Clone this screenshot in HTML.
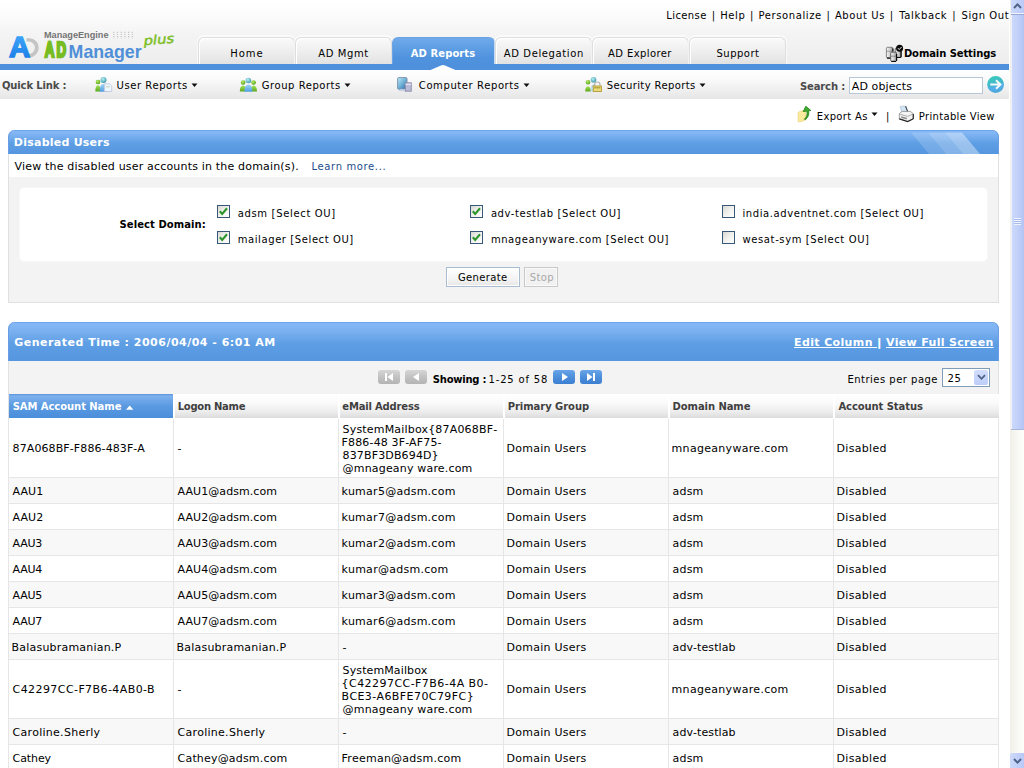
<!DOCTYPE html>
<html>
<head>
<meta charset="utf-8">
<title>ADManager Plus - Disabled Users</title>
<style>
html,body{margin:0;padding:0;}
body{width:1024px;height:768px;overflow:hidden;background:#fff;position:relative;
 font-family:"DejaVu Sans","Liberation Sans",sans-serif;font-size:11px;color:#000;}
.a{position:absolute;}
.t{position:absolute;white-space:nowrap;line-height:14px;}
svg{position:absolute;overflow:visible;}
/* header */
#hdr{left:0;top:0;width:1009px;height:64px;background:linear-gradient(#ffffff 0,#fcfcfc 14px,#f4f4f4 34px,#ededed 64px);}
#bar{left:0;top:64px;width:1009px;height:6px;background:#4e90dc;}
#ql{left:0;top:70px;width:1009px;height:29px;background:linear-gradient(#ffffff 0,#fbfbfb 8px,#f1f1f1 18px,#e6e6e6 29px);}
.tab{position:absolute;top:37px;height:27px;width:97px;border:1px solid #dedede;border-bottom:none;border-radius:6px 6px 0 0;
 background:linear-gradient(#fafafa 0,#f2f2f2 9px,#e9e9e9 19px,#e1e1e1 27px);box-sizing:border-box;box-shadow:inset 1px 1px 0 #fff,0 -1px 0 1px rgba(255,255,255,.6);}
.tab.on{background:linear-gradient(#70aaea 0,#5e9ee4 10px,#4f92dd 20px,#4e90dc 27px);border-color:#6aa4e6;width:103px;box-shadow:none;}
/* panels */
.ph{background:linear-gradient(#6299e2 0,#84b7f5 1.5px,#7db2f1 20%,#5e9ee4 55%,#5596e0 100%);border-radius:7px 7px 0 0;box-shadow:inset 1px 0 0 #6a9de6,inset -1px 0 0 #6a9de6;}
.cb{position:absolute;width:13px;height:13px;box-sizing:border-box;border:1px solid #38587a;background:linear-gradient(135deg,#d8d8d3 0,#f1f1ed 50%,#ffffff 100%);}
.pg{position:absolute;top:370px;width:22px;height:14px;border-radius:3px;}
.pg.g{background:linear-gradient(#d6d6d6,#c2c2c2 50%,#b4b4b4);}
.pg.bl{background:linear-gradient(#6aa6e8,#4d8fdb 50%,#3c7fd0);}
/* table */
#grid{position:absolute;left:8px;top:394px;width:991px;border-collapse:separate;border-spacing:0;table-layout:fixed;}
#grid th{height:25px;padding:0 0 1px 4px;text-align:left;font-weight:bold;font-size:10px;color:#3f3f3f;border-left:2px solid #fff;white-space:nowrap;line-height:14px;
 background:linear-gradient(#ffffff 0,#fbfbfb 8px,#ececec 18px,#dcdcdc 24px,#fff 24px);box-sizing:border-box;vertical-align:top;padding-top:6px;}
#grid th.s{background:linear-gradient(#5d92dc 0,#7db1ee 2px,#5a9ae1 12px,#4a8dda 24px,#fff 24px);color:#fff;border-left:1px solid #e0e0e0;}
#grid th i.up{display:inline-block;width:0;height:0;border-left:3.7px solid transparent;border-right:3.7px solid transparent;border-bottom:4px solid #fff;margin-left:4px;vertical-align:1px;}
#grid td{height:26px;padding:4px 0 2px 3.6px;border-left:1px solid #e6e6e6;border-bottom:1px solid #e6e6e6;line-height:13px;box-sizing:border-box;vertical-align:middle;white-space:nowrap;}
#grid tr td:last-child{border-right:1px solid #e6e6e6;}
#grid tr.e td{background:#f8f8f8;}
#grid span{display:inline-block;}
</style>
</head>
<body>
<!-- header backgrounds -->
<div class="a" id="hdr"></div>
<div class="a" id="bar"></div>
<div class="a" id="ql"></div>

<!-- logo -->
<svg style="left:0;top:26px" width="180" height="40" viewBox="0 26 180 40">
 <defs>
  <linearGradient id="lgA" x1="0" y1="0" x2="0" y2="1"><stop offset="0" stop-color="#45adfb"/><stop offset="1" stop-color="#1878e6"/></linearGradient>
 </defs>
 <path d="M26.5 38.3 h3 a9.2 9.45 0 0 1 0 18.9 h-3 v-3.2 h2.2 a6.2 6.2 0 0 0 0-12.4 h-2.2z" fill="#c4c4c4"/>
 <text x="8.9" y="56.9" font-family="Liberation Sans,sans-serif" font-weight="bold" font-size="29.5" fill="url(#lgA)" stroke="url(#lgA)" stroke-width="1.5" stroke-linejoin="miter" textLength="21.2" lengthAdjust="spacingAndGlyphs">A</text>
 <text x="44" y="38" font-family="Liberation Sans,sans-serif" font-weight="bold" font-size="9" fill="#747474" textLength="64.5" lengthAdjust="spacingAndGlyphs">ManageEngine</text>
 <g stroke="#c4c4c4" stroke-width="1.2" stroke-dasharray="1.2 0.9"><path d="M113.8 31.8v6.400M117.5 31.800v6.400M121.200 31.800v6.400M124.900 31.800v6.400M128.600 31.800v6.400M132.300 31.800v6.400"/></g>
 <text transform="translate(44.7 57.2) scale(0.625 1)" x="0" y="0" font-family="Liberation Sans,sans-serif" font-weight="bold" font-size="21.4" fill="#77bc22" stroke="#77bc22" stroke-width="2.6" letter-spacing="3.6">AD</text>
 <text x="68.6" y="57.6" font-family="Liberation Sans,sans-serif" font-weight="bold" font-size="17.8" fill="#4f8fd8" textLength="73" lengthAdjust="spacingAndGlyphs">Manager</text>
 <text x="144" y="45.3" font-family="DejaVu Sans,sans-serif" font-style="oblique" font-size="12.5" fill="#7cbf27" stroke="#7cbf27" stroke-width="0.45" transform="rotate(-5 144 45.3)" textLength="30.5" lengthAdjust="spacingAndGlyphs">plus</text>
</svg>

<!-- tabs -->
<div class="tab" style="left:198px;"></div>
<div class="tab" style="left:295px;"></div>
<div class="tab on" style="left:392px;"></div>
<div class="tab" style="left:495px;"></div>
<div class="tab" style="left:592px;"></div>
<div class="tab" style="left:689px;"></div>
<svg style="left:428px;top:64px" width="30" height="6" viewBox="0 0 30 6"><path d="M2.500 6 L13 1.400 Q15 0.500 17 1.400 L27.500 6z" fill="#fff"/></svg>

<!-- domain settings icon -->
<svg style="left:884px;top:43px" width="22" height="20" viewBox="884 43 22 20">
 <defs><linearGradient id="cy" x1="0" y1="0" x2="1" y2="0"><stop offset="0" stop-color="#f6f6f6"/><stop offset="0.55" stop-color="#cfcfcf"/><stop offset="1" stop-color="#8a8a8a"/></linearGradient></defs>
 <rect x="895.200" y="48" width="5.800" height="9.300" rx="1" fill="url(#cy)" stroke="#4a4a4a" stroke-width="0.800"/>
 <path d="M901.100 50v7.200M895.800 57.500h5" stroke="#0c0c0c" stroke-width="1.200"/>
 <rect x="886.400" y="47.300" width="6.400" height="10.600" rx="1" fill="url(#cy)" stroke="#6a6a6a" stroke-width="0.800"/>
 <path d="M886.600 51.300h6.200" stroke="#8a8a8a" stroke-width="0.800"/>
 <path d="M887 58.200h3.600M892.900 48.500v3" stroke="#111" stroke-width="1.200"/>
 <rect x="890.700" y="52.200" width="5.800" height="9" rx="1" fill="url(#cy)" stroke="#4a4a4a" stroke-width="0.800"/>
 <path d="M890.900 56.200h5.400" stroke="#777" stroke-width="0.800"/>
 <path d="M891.300 61.500h4.800M896.600 54v7" stroke="#0c0c0c" stroke-width="1.200"/>
 <circle cx="899.600" cy="48.300" r="3.500" fill="#0a0a0a"/>
 <path d="M897.900 48.100l1.300 1.500 2.400-2.600" stroke="#fff" stroke-width="0.900" fill="none"/>
</svg>

<!-- quick link icons -->
<svg style="left:94px;top:76px" width="20" height="17" viewBox="94 76 20 17">
 <defs>
  <radialGradient id="gh" cx="0.4" cy="0.35" r="0.7"><stop offset="0" stop-color="#b9ef6a"/><stop offset="1" stop-color="#4f9a10"/></radialGradient>
  <radialGradient id="bh" cx="0.4" cy="0.35" r="0.7"><stop offset="0" stop-color="#b8f2f4"/><stop offset="1" stop-color="#3a93a8"/></radialGradient>
  <linearGradient id="gb" x1="0" y1="0" x2="0" y2="1"><stop offset="0" stop-color="#a6e35a"/><stop offset="1" stop-color="#5aa818"/></linearGradient>
  <linearGradient id="bb" x1="0" y1="0" x2="0" y2="1"><stop offset="0" stop-color="#9fd4f6"/><stop offset="1" stop-color="#4f9fe0"/></linearGradient>
 </defs>
 <path d="M95.3 91.5q0-6 2.7-6.3 2.7.3 2.7 6.3z" fill="url(#gb)"/>
 <circle cx="98" cy="82" r="2.3" fill="url(#gh)"/>
 <path d="M99.6 91.8q0-7.5 3.8-7.8 3.8.3 3.8 7.8z" fill="url(#bb)"/>
 <circle cx="103.5" cy="80" r="3" fill="url(#bh)"/>
 <path d="M104.300 83.800h5.200l2.200 2v5.700h-7.400z" fill="#e8f8fc" stroke="#bdbad8" stroke-width="0.7"/>
 <path d="M105.800 86.800h4" stroke="#c9c4ae" stroke-width="0.9"/>
</svg>
<svg style="left:238px;top:76px" width="20" height="17" viewBox="238 76 20 17">
 <path d="M239.8 91.6q0-5.6 3.2-6 3.2.4 3.2 6z" fill="url(#gb)"/>
 <path d="M250.6 91.6q0-5.6 3.2-6 3.2.4 3.2 6z" fill="url(#gb)"/>
 <circle cx="243.1" cy="82.5" r="2.3" fill="url(#gh)"/>
 <circle cx="253.6" cy="82.5" r="2.3" fill="url(#gh)"/>
 <path d="M244.3 91.8q0-7 4.1-7.3 4.1.3 4.1 7.3z" fill="url(#bb)"/>
 <circle cx="248.4" cy="80.5" r="2.8" fill="url(#bh)"/>
</svg>
<svg style="left:396px;top:76px" width="18" height="17" viewBox="396 76 18 17">
 <defs><linearGradient id="scr" x1="0" y1="0" x2="1" y2="1"><stop offset="0" stop-color="#bfeaf6"/><stop offset="0.5" stop-color="#6fb2d6"/><stop offset="1" stop-color="#2f64a4"/></linearGradient></defs>
 <rect x="397.6" y="77.6" width="9.4" height="11.6" rx="1" fill="url(#scr)" stroke="#7d97b4" stroke-width="1"/>
 <path d="M398.5 91.3h8.5l-1.5-2h-5z" fill="#c9d3e6"/>
 <rect x="405.3" y="82.8" width="6" height="8.4" fill="#b9bad6" stroke="#8c8ca8" stroke-width="0.9"/>
 <path d="M405.5 84.3h5.6" stroke="#eef" stroke-width="1"/>
</svg>
<svg style="left:584px;top:76px" width="20" height="17" viewBox="584 76 20 17">
 <path d="M585.2 91.5q0-5 2.8-5.3 2.8.3 2.8 5.3z" fill="url(#gb)"/>
 <circle cx="588" cy="82.3" r="2.3" fill="url(#gh)"/>
 <path d="M590.5 91.5q0-7 3.3-7.3 3.3.3 3.3 7.3z" fill="#bcdcf2"/>
 <circle cx="593.5" cy="79.8" r="2.8" fill="url(#bh)"/>
 <path d="M594.6 86v-1.3a2.7 2.7 0 0 1 5.4 0V86" fill="none" stroke="#b5b5b5" stroke-width="1.2"/>
 <rect x="593.2" y="86" width="8.2" height="5.5" fill="#e9db7c" stroke="#b39b32" stroke-width="0.9"/>
 <path d="M594.2 87.8h6.2" stroke="#a89325" stroke-width="1"/>
</svg>
<!-- dropdown arrows -->
<svg style="left:191px;top:83px" width="7" height="5"><path d="M0.5 0.5h6L3.5 4z" fill="#111"/></svg>
<svg style="left:344px;top:83px" width="7" height="5"><path d="M0.5 0.5h6L3.5 4z" fill="#111"/></svg>
<svg style="left:523px;top:83px" width="7" height="5"><path d="M0.5 0.5h6L3.5 4z" fill="#111"/></svg>
<svg style="left:699px;top:83px" width="7" height="5"><path d="M0.5 0.5h6L3.5 4z" fill="#111"/></svg>
<svg style="left:871px;top:112px" width="7" height="5"><path d="M0.5 0.5h6L3.5 4z" fill="#111"/></svg>

<!-- search -->
<div class="a" style="left:849px;top:77px;width:132px;height:15px;border:1px solid #b9c7d8;background:#fff;"></div>
<svg style="left:986px;top:75px" width="19" height="19" viewBox="986 75 19 19">
 <defs><linearGradient id="go" x1="0.3" y1="0" x2="0.6" y2="1"><stop offset="0" stop-color="#3ccbbb"/><stop offset="0.45" stop-color="#41b9cb"/><stop offset="0.7" stop-color="#55aeea"/><stop offset="1" stop-color="#4aa6d4"/></linearGradient></defs>
 <circle cx="995.6" cy="84.5" r="8.400" fill="url(#go)"/>
 <path d="M990.300 84.500h9M996 80.200l4.500 4.300-4.500 4.300" stroke="#fff" stroke-width="1.900" fill="none" stroke-linejoin="miter" opacity="0.95"/>
</svg>

<!-- export / print icons -->
<svg style="left:796px;top:104px" width="18" height="19" viewBox="796 104 18 19">
 <path d="M798.2 112.3l4-1.6 3.6 1v8l-3.6 1.6-4 .5z" fill="#faeb9c" stroke="#ecd47a" stroke-width="0.8"/>
 <path d="M804.3 119.3c2.6-2.2 3.2-5 2.6-8.2l-3.7.4 2.6-5.2 5 4.2-2.2.3c.8 4-.6 6.6-3 8.600z" fill="#3dae2b" stroke="#1f7a14" stroke-width="0.8"/>
</svg>
<svg style="left:897px;top:104px" width="18" height="19" viewBox="897 104 18 19">
 <path d="M900.200 106.400l5.300-.4 2.400 6.300-6.100.5z" fill="#d4e6f4" stroke="#a9bfd2" stroke-width="0.700"/>
 <path d="M905.600 106.200l2.300 6" stroke="#3b4652" stroke-width="1.100"/>
 <path d="M899.300 113.600l2.900-2.200h8.200l2.900 2.400v5l-5.600 2.700-8.400-2.600z" fill="#f4f4f4" stroke="#8a8a8a" stroke-width="0.800"/>
 <path d="M899.500 114.200l8.200 2.200 5.400-2.400" stroke="#9a9a9a" stroke-width="0.800" fill="none"/>
 <path d="M901.200 116.200l5.600 1.500v1.800l-5.600-1.600z" fill="#8f8f8f"/>
 <path d="M899.300 118.900l8.400 2.600 5.600-2.700M913.300 114v4.800" stroke="#2c2c2c" stroke-width="1.200" fill="none"/>
</svg>

<!-- panel 1 -->
<div class="a ph" style="left:8px;top:130px;width:991px;height:24px;overflow:hidden;">
 <svg style="left:0;top:0" width="991" height="24"><g fill="#ffffff"><path d="M903 2.500h17l18 21.500h-17z" opacity="0.16"/><path d="M920 2.500h17l18 21.500h-17z" opacity="0.27"/><path d="M937 2.500h17l18 21.500h-17z" opacity="0.38"/></g></svg>
</div>
<div class="a" style="left:8px;top:154px;width:989px;height:148px;border:1px solid #e0e0e0;border-top:none;background:#f3f3f3;"></div>
<div class="a" style="left:9px;top:154px;width:989px;height:23px;background:#fff;"></div>
<div class="a" style="left:19px;top:187px;width:967px;height:73px;border:1px solid #f7f7f7;border-radius:5px;background:#fff;"></div>
<div class="cb on" style="left:217px;top:205px;"><svg style="left:0;top:0" width="11" height="11"><path d="M1.800 5.200L4.200 7.900 9 2.300" stroke="#2b952b" stroke-width="2.100" fill="none"/></svg></div>
<div class="cb on" style="left:217px;top:231px;"><svg style="left:0;top:0" width="11" height="11"><path d="M1.800 5.200L4.200 7.900 9 2.300" stroke="#2b952b" stroke-width="2.100" fill="none"/></svg></div>
<div class="cb on" style="left:470px;top:205px;"><svg style="left:0;top:0" width="11" height="11"><path d="M1.800 5.200L4.200 7.900 9 2.300" stroke="#2b952b" stroke-width="2.100" fill="none"/></svg></div>
<div class="cb on" style="left:470px;top:231px;"><svg style="left:0;top:0" width="11" height="11"><path d="M1.800 5.200L4.200 7.900 9 2.300" stroke="#2b952b" stroke-width="2.100" fill="none"/></svg></div>
<div class="cb" style="left:722px;top:205px;"></div>
<div class="cb" style="left:722px;top:231px;"></div>
<div class="a" style="left:446px;top:267px;width:72px;height:18px;border:1px solid #a9bdd0;background:linear-gradient(#ffffff,#f4f4f4 60%,#e6e6e6);box-shadow:inset 0 0 0 1px #fff;"></div>
<div class="a" style="left:524px;top:267px;width:32px;height:18px;border:1px solid #c9c9c9;background:#f1f1f1;box-shadow:inset 0 0 0 1px #fafafa;"></div>

<!-- panel 2 -->
<div class="a ph" style="left:8px;top:322px;width:991px;height:39px;"></div>
<div class="a" style="left:8px;top:361px;width:989px;height:33px;border-left:1px solid #e2e2e2;border-right:1px solid #e2e2e2;background:#f3f3f3;"></div>
<div class="pg g" style="left:378px;"><svg style="left:6px;top:3px" width="10" height="8"><path d="M1 0h2v8H1zM9 0v8L3.500 4z" fill="#fff"/></svg></div>
<div class="pg g" style="left:405px;"><svg style="left:7px;top:3px" width="8" height="8"><path d="M7 0v8L1 4z" fill="#fff"/></svg></div>
<div class="pg bl" style="left:553px;"><svg style="left:8px;top:3px" width="8" height="8"><path d="M1 0v8L7 4z" fill="#fff"/></svg></div>
<div class="pg bl" style="left:580px;"><svg style="left:6px;top:3px" width="10" height="8"><path d="M7 0h2v8H7zM1 0v8L6.500 4z" fill="#fff"/></svg></div>
<div class="a" style="left:942px;top:368px;width:46px;height:17px;border:1px solid #7f9db9;background:#fff;"></div>
<div class="a" style="left:974px;top:370px;width:14px;height:15px;border-radius:2px;background:linear-gradient(#d3defc,#bccdf8);"></div>
<svg style="left:977px;top:374px" width="9" height="7"><path d="M1 1.200l3.500 3.600L8 1.200" stroke="#4d6185" stroke-width="1.800" fill="none"/></svg>

<div class="t" style="left:666.3px;top:9px;letter-spacing:0.39px;font-size:10px;">License</div>
<div class="t" style="left:720.2px;top:9px;letter-spacing:0.62px;font-size:10px;">Help</div>
<div class="t" style="left:758.4px;top:9px;letter-spacing:0.61px;font-size:10px;">Personalize</div>
<div class="t" style="left:834.9px;top:9px;letter-spacing:0.62px;font-size:10px;">About Us</div>
<div class="t" style="left:899.2px;top:9px;letter-spacing:0.65px;font-size:10px;">Talkback</div>
<div class="t" style="left:961.5px;top:9px;letter-spacing:0.57px;font-size:10px;">Sign Out</div>
<div class="t" style="left:711.7px;top:9px;font-size:10px;">|</div>
<div class="t" style="left:749.9px;top:9px;font-size:10px;">|</div>
<div class="t" style="left:826.5px;top:9px;font-size:10px;">|</div>
<div class="t" style="left:889.7px;top:9px;font-size:10px;">|</div>
<div class="t" style="left:952.3px;top:9px;font-size:10px;">|</div>
<div class="t" style="left:230.3px;top:47px;letter-spacing:0.94px;font-size:10px;">Home</div>
<div class="t" style="left:318.2px;top:47px;letter-spacing:0.61px;font-size:10px;">AD Mgmt</div>
<div class="t" style="left:410.8px;top:47px;letter-spacing:0.07px;font-weight:bold;font-size:10px;color:#fff;">AD Reports</div>
<div class="t" style="left:503.8px;top:47px;letter-spacing:0.61px;font-size:10px;">AD Delegation</div>
<div class="t" style="left:608.0px;top:47px;letter-spacing:0.40px;font-size:10px;">AD Explorer</div>
<div class="t" style="left:716.5px;top:47px;letter-spacing:0.48px;font-size:10px;">Support</div>
<div class="t" style="left:903.9px;top:47px;letter-spacing:-0.09px;font-weight:bold;font-size:10px;">Domain Settings</div>
<div class="t" style="left:2.0px;top:79px;letter-spacing:-0.15px;font-weight:bold;font-size:10px;color:#4a4a4a;">Quick Link :</div>
<div class="t" style="left:116.5px;top:79px;letter-spacing:0.58px;font-size:10px;">User Reports</div>
<div class="t" style="left:261.8px;top:79px;letter-spacing:0.54px;font-size:10px;">Group Reports</div>
<div class="t" style="left:418.8px;top:79px;letter-spacing:0.60px;font-size:10px;">Computer Reports</div>
<div class="t" style="left:606.8px;top:79px;letter-spacing:0.39px;font-size:10px;">Security Reports</div>
<div class="t" style="left:800.0px;top:80px;letter-spacing:-0.14px;font-weight:bold;font-size:10px;color:#4a4a4a;">Search :</div>
<div class="t" style="left:851.8px;top:80px;letter-spacing:0.11px;">AD objects</div>
<div class="t" style="left:816.8px;top:110px;letter-spacing:0.33px;font-size:10px;">Export As</div>
<div class="t" style="left:886.0px;top:110px;font-size:10px;">|</div>
<div class="t" style="left:918.8px;top:110px;letter-spacing:0.33px;font-size:10px;">Printable View</div>
<div class="t" style="left:13.8px;top:136px;letter-spacing:0.24px;font-weight:bold;color:#fff;">Disabled Users</div>
<div class="t" style="left:14.5px;top:160px;letter-spacing:0.18px;">View the disabled user accounts in the domain(s).</div>
<div class="t" style="left:311.5px;top:160px;letter-spacing:0.63px;font-size:10px;color:#1d4c8c;">Learn more...</div>
<div class="t" style="left:119.6px;top:218px;letter-spacing:0.06px;font-weight:bold;font-size:10px;">Select Domain:</div>
<div class="t" style="left:237.7px;top:207px;letter-spacing:0.66px;font-size:10px;">adsm [Select OU]</div>
<div class="t" style="left:237.7px;top:233px;letter-spacing:0.59px;font-size:10px;">mailager [Select OU]</div>
<div class="t" style="left:490.9px;top:207px;letter-spacing:0.60px;font-size:10px;">adv-testlab [Select OU]</div>
<div class="t" style="left:490.9px;top:233px;letter-spacing:0.57px;font-size:10px;">mnageanyware.com [Select OU]</div>
<div class="t" style="left:742.5px;top:207px;letter-spacing:0.58px;font-size:10px;">india.adventnet.com [Select OU]</div>
<div class="t" style="left:742.5px;top:233px;letter-spacing:0.61px;font-size:10px;">wesat-sym [Select OU]</div>
<div class="t" style="left:457.9px;top:271px;letter-spacing:0.36px;font-size:10px;">Generate</div>
<div class="t" style="left:529.8px;top:271px;letter-spacing:0.34px;font-size:10px;color:#a8a8a8;">Stop</div>
<div class="t" style="left:14.2px;top:336px;letter-spacing:0.49px;font-weight:bold;color:#fff;">Generated Time : 2006/04/04 - 6:01 AM</div>
<div class="t" style="left:794.1px;top:336px;letter-spacing:0.36px;font-weight:bold;color:#fff;text-decoration:underline;">Edit Column&nbsp;</div>
<div class="t" style="left:876.9px;top:336px;font-weight:bold;color:#fff;text-shadow:0.7px 0 0 #fff;">|</div>
<div class="t" style="left:886.0px;top:336px;letter-spacing:0.33px;font-weight:bold;color:#fff;text-decoration:underline;">View Full Screen</div>
<div class="t" style="left:432.8px;top:373px;letter-spacing:-0.24px;font-weight:bold;font-size:10px;">Showing :</div>
<div class="t" style="left:488.5px;top:373px;letter-spacing:0.83px;font-size:10px;">1-25 of 58</div>
<div class="t" style="left:847.5px;top:373px;letter-spacing:0.48px;font-size:10px;">Entries per page</div>
<div class="t" style="left:947.5px;top:372px;letter-spacing:0.64px;font-size:10px;">25</div>

<table id="grid">
<colgroup><col style="width:165px"><col style="width:165px"><col style="width:165px"><col style="width:165px"><col style="width:165px"><col style="width:166px"></colgroup>
<tr><th class="s" style="padding-left:3.7px;letter-spacing:-0.06px">SAM Account Name</th><th style="padding-left:2.7px;letter-spacing:-0.26px">Logon Name</th><th style="padding-left:2.3px;letter-spacing:-0.18px">eMail Address</th><th style="padding-left:2.7px;letter-spacing:-0.05px">Primary Group</th><th style="padding-left:2.6px;letter-spacing:-0.08px">Domain Name</th><th style="padding-left:3.4px;letter-spacing:-0.08px">Account Status</th></tr>
<tr><td><span style="letter-spacing:0.10px;margin-left:0.0px;position:relative;top:-1px">87A068BF-F886-483F-A</span></td><td><span style="letter-spacing:0.00px;margin-left:0.0px;position:relative;top:-1px">-</span></td><td><span style="letter-spacing:0.18px;margin-left:0.0px">SystemMailbox{87A068BF-</span><br><span style="letter-spacing:0.15px;margin-left:-1.0px">F886-48 3F-AF75-</span><br><span style="letter-spacing:0.14px;margin-left:0.0px">837BF3DB694D}</span><br><span style="letter-spacing:0.18px;margin-left:0.0px">@mnageany ware.com</span></td><td><span style="letter-spacing:0.25px;margin-left:-1.0px;position:relative;top:-1px">Domain Users</span></td><td><span style="letter-spacing:0.30px;margin-left:-1.0px;position:relative;top:-1px">mnageanyware.com</span></td><td><span style="letter-spacing:0.31px;margin-left:-1.0px;position:relative;top:-1px">Disabled</span></td></tr>
<tr class="e"><td><span style="letter-spacing:0.06px;margin-left:0.0px">AAU1</span></td><td><span style="letter-spacing:0.07px;margin-left:0.0px">AAU1@adsm.com</span></td><td><span style="letter-spacing:0.26px;margin-left:-1.0px">kumar5@adsm.com</span></td><td><span style="letter-spacing:0.25px;margin-left:-1.0px">Domain Users</span></td><td><span style="letter-spacing:0.18px;margin-left:0.0px">adsm</span></td><td><span style="letter-spacing:0.31px;margin-left:-1.0px">Disabled</span></td></tr>
<tr><td><span style="letter-spacing:0.06px;margin-left:0.0px">AAU2</span></td><td><span style="letter-spacing:0.07px;margin-left:0.0px">AAU2@adsm.com</span></td><td><span style="letter-spacing:0.26px;margin-left:-1.0px">kumar7@adsm.com</span></td><td><span style="letter-spacing:0.25px;margin-left:-1.0px">Domain Users</span></td><td><span style="letter-spacing:0.18px;margin-left:0.0px">adsm</span></td><td><span style="letter-spacing:0.31px;margin-left:-1.0px">Disabled</span></td></tr>
<tr class="e"><td><span style="letter-spacing:-0.27px;margin-left:0.0px">AAU3</span></td><td><span style="letter-spacing:0.07px;margin-left:0.0px">AAU3@adsm.com</span></td><td><span style="letter-spacing:0.26px;margin-left:-1.0px">kumar2@adsm.com</span></td><td><span style="letter-spacing:0.25px;margin-left:-1.0px">Domain Users</span></td><td><span style="letter-spacing:0.18px;margin-left:0.0px">adsm</span></td><td><span style="letter-spacing:0.31px;margin-left:-1.0px">Disabled</span></td></tr>
<tr><td><span style="letter-spacing:-0.27px;margin-left:0.0px">AAU4</span></td><td><span style="letter-spacing:0.07px;margin-left:0.0px">AAU4@adsm.com</span></td><td><span style="letter-spacing:0.27px;margin-left:-1.0px">kumar@adsm.com</span></td><td><span style="letter-spacing:0.25px;margin-left:-1.0px">Domain Users</span></td><td><span style="letter-spacing:0.18px;margin-left:0.0px">adsm</span></td><td><span style="letter-spacing:0.31px;margin-left:-1.0px">Disabled</span></td></tr>
<tr class="e"><td><span style="letter-spacing:-0.27px;margin-left:0.0px">AAU5</span></td><td><span style="letter-spacing:0.07px;margin-left:0.0px">AAU5@adsm.com</span></td><td><span style="letter-spacing:0.26px;margin-left:-1.0px">kumar3@adsm.com</span></td><td><span style="letter-spacing:0.25px;margin-left:-1.0px">Domain Users</span></td><td><span style="letter-spacing:0.18px;margin-left:0.0px">adsm</span></td><td><span style="letter-spacing:0.31px;margin-left:-1.0px">Disabled</span></td></tr>
<tr><td><span style="letter-spacing:-0.27px;margin-left:0.0px">AAU7</span></td><td><span style="letter-spacing:0.07px;margin-left:0.0px">AAU7@adsm.com</span></td><td><span style="letter-spacing:0.26px;margin-left:-1.0px">kumar6@adsm.com</span></td><td><span style="letter-spacing:0.25px;margin-left:-1.0px">Domain Users</span></td><td><span style="letter-spacing:0.18px;margin-left:0.0px">adsm</span></td><td><span style="letter-spacing:0.31px;margin-left:-1.0px">Disabled</span></td></tr>
<tr class="e"><td><span style="letter-spacing:0.20px;margin-left:-1.0px">Balasubramanian.P</span></td><td><span style="letter-spacing:0.20px;margin-left:-1.0px">Balasubramanian.P</span></td><td><span style="letter-spacing:0.00px;margin-left:0.0px">-</span></td><td><span style="letter-spacing:0.25px;margin-left:-1.0px">Domain Users</span></td><td><span style="letter-spacing:0.12px;margin-left:0.0px">adv-testlab</span></td><td><span style="letter-spacing:0.31px;margin-left:-1.0px">Disabled</span></td></tr>
<tr><td><span style="letter-spacing:0.42px;margin-left:0.0px;position:relative;top:-1px">C42297CC-F7B6-4AB0-B</span></td><td><span style="letter-spacing:0.00px;margin-left:0.0px;position:relative;top:-1px">-</span></td><td><span style="letter-spacing:0.11px;margin-left:0.0px">SystemMailbox</span><br><span style="letter-spacing:0.45px;margin-left:-1.0px">{C42297CC-F7B6-4A B0-</span><br><span style="letter-spacing:0.43px;margin-left:-1.0px">BCE3-A6BFE70C79FC}</span><br><span style="letter-spacing:0.18px;margin-left:0.0px">@mnageany ware.com</span></td><td><span style="letter-spacing:0.25px;margin-left:-1.0px;position:relative;top:-1px">Domain Users</span></td><td><span style="letter-spacing:0.30px;margin-left:-1.0px;position:relative;top:-1px">mnageanyware.com</span></td><td><span style="letter-spacing:0.31px;margin-left:-1.0px;position:relative;top:-1px">Disabled</span></td></tr>
<tr class="e"><td><span style="letter-spacing:0.28px;margin-left:0.0px">Caroline.Sherly</span></td><td><span style="letter-spacing:0.28px;margin-left:0.0px">Caroline.Sherly</span></td><td><span style="letter-spacing:0.00px;margin-left:0.0px">-</span></td><td><span style="letter-spacing:0.25px;margin-left:-1.0px">Domain Users</span></td><td><span style="letter-spacing:0.12px;margin-left:0.0px">adv-testlab</span></td><td><span style="letter-spacing:0.31px;margin-left:-1.0px">Disabled</span></td></tr>
<tr><td><span style="letter-spacing:-0.09px;margin-left:0.0px">Cathey</span></td><td><span style="letter-spacing:0.18px;margin-left:0.0px">Cathey@adsm.com</span></td><td><span style="letter-spacing:0.25px;margin-left:-1.0px">Freeman@adsm.com</span></td><td><span style="letter-spacing:0.25px;margin-left:-1.0px">Domain Users</span></td><td><span style="letter-spacing:0.18px;margin-left:0.0px">adsm</span></td><td><span style="letter-spacing:0.31px;margin-left:-1.0px">Disabled</span></td></tr>
</table>
<svg style="left:126px;top:405px" width="8" height="5"><path d="M0 4.800L3.700 0.500 7.400 4.800z" fill="#fff"/></svg>


<!-- scrollbar -->
<div class="a" style="left:1009px;top:0;width:2px;height:768px;background:#fff;"></div>
<div class="a" style="left:1010px;top:0;width:14px;height:768px;background:linear-gradient(90deg,#f0f0e9,#fafaf5 60%,#fdfdf9);"></div>
<div class="a" style="left:1011px;top:0;width:13px;height:13px;background:linear-gradient(90deg,#cdd9fb,#b9c9f7);"></div>
<div class="a" style="left:1011px;top:13px;width:13px;height:1px;background:#eef3ff;"></div>
<div class="a" style="left:1011px;top:14px;width:13px;height:1px;background:#9aaad6;"></div>
<div class="a" style="left:1011px;top:15px;width:13px;height:414px;background:linear-gradient(90deg,#ffffff 0,#cbd8fc 1.500px,#c2d1f9 50%,#b3c4f5 100%);border-radius:0 0 0 2px;"></div>
<div class="a" style="left:1011px;top:429px;width:13px;height:1px;background:#a9b6dc;"></div>
<svg style="left:1013px;top:2px" width="9" height="8"><path d="M1 6l3.500-3.600L8 6" stroke="#4d6185" stroke-width="1.900" fill="none"/></svg>
<div class="a" style="left:1010px;top:753px;width:14px;height:15px;background:linear-gradient(90deg,#cdd9fb,#b9c9f7);border-radius:2px 0 0 0;"></div>
<svg style="left:1013px;top:757px" width="9" height="8"><path d="M1 2l3.500 3.600L8 2" stroke="#4d6185" stroke-width="1.900" fill="none"/></svg>
<svg style="left:1014px;top:218px" width="8" height="8"><path d="M0 .5h7M0 2.500h7M0 4.500h7M0 6.500h7" stroke="#eef3ff" stroke-width="1"/><path d="M0 1.500h7M0 3.500h7M0 5.500h7" stroke="#a9baee" stroke-width="1"/></svg>
</body>
</html>
